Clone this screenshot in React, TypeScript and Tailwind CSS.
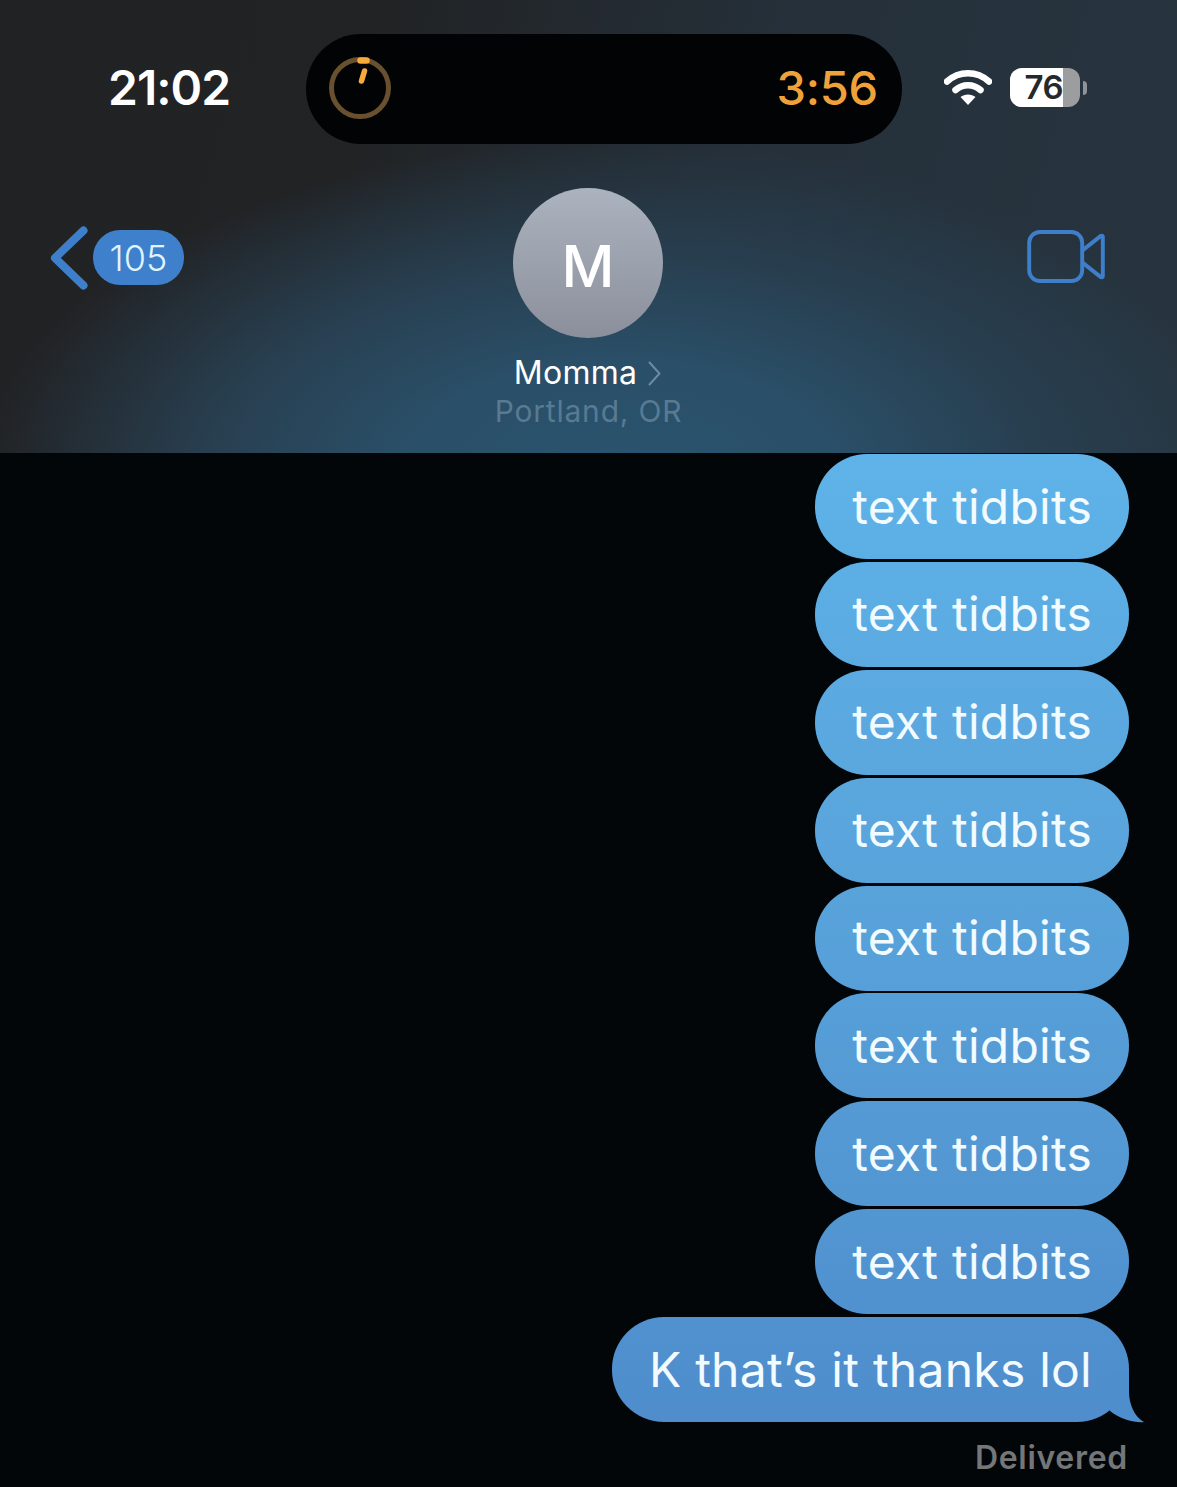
const bubbles = [
  "bg-[linear-gradient(180deg,#5fb3e8,#5cafe5)]",
  "bg-[linear-gradient(180deg,#5cafe5,#5baae1)]",
  "bg-[linear-gradient(180deg,#5baae1,#5aa7de)]",
  "bg-[linear-gradient(180deg,#5aa7de,#59a3db)]",
  "bg-[linear-gradient(180deg,#59a3db,#569fd8)]",
  "bg-[linear-gradient(180deg,#569fd8,#559ad4)]",
  "bg-[linear-gradient(180deg,#559ad4,#5296d2)]",
  "bg-[linear-gradient(180deg,#5296d2,#5091cf)]",
];

function Bubble({ text, className }: { text: string; className: string }) {
  return (
    <div className={`h-[105px] rounded-[52px] px-[37px] flex items-center text-[48px] leading-none tracking-[0.25px] text-[#f2fbff] ${className}`}>
      {text}
    </div>
  );
}

export default function App() {
  return (
    <div className="w-[1177px] h-[1487px] overflow-hidden bg-[#030608] font-['Inter','Liberation_Sans',sans-serif]">
      {/* Header */}
      <header className="h-[453px] bg-[radial-gradient(ellipse_640px_340px_at_620px_480px,#2b546e_0%,#2a4f68_35%,#283f50_65%,rgba(38,52,64,0)_100%),linear-gradient(105deg,#212224_0%,#212325_30%,#25303a_62%,#27343f_100%)]">
        {/* Status bar */}
        <div className="h-[144px] pt-[34px] flex">
          <div className="w-[306px] h-[110px] flex items-center pb-[2px] pl-[108px]">
            <span className="text-[48px] font-semibold leading-none tracking-[-1px] text-white">21:02</span>
          </div>
          <div className="w-[596px] h-[110px] rounded-[55px] bg-[#020304] flex items-center justify-between pl-[22px] pr-[24px]">
            <svg width="64" height="64" viewBox="0 0 64 64" fill="none">
              <circle cx="32" cy="31" r="28.5" stroke="#69502f" strokeWidth="5" />
              <path d="M32.5 3.5h6" stroke="#f6aa3e" strokeWidth="6.5" strokeLinecap="round" />
              <path d="M36.5 14 L33.5 24" stroke="#f6aa3e" strokeWidth="5.5" strokeLinecap="round" />
            </svg>
            <span className="pb-[4px] text-[47px] font-medium leading-none tracking-[-0.2px] text-[#f0a23a]">3:56</span>
          </div>
          <div className="flex items-center pl-[42px] pb-[3px]">
            <svg width="48" height="37" viewBox="0 0 48 37" fill="none">
              <path d="M3 12.5 C15 1.5 33 1.5 45 12.5" stroke="#fff" strokeWidth="6.5" strokeLinecap="round" />
              <path d="M11.5 21 C18.5 14.5 29.5 14.5 36.5 21" stroke="#fff" strokeWidth="6.5" strokeLinecap="round" />
              <path d="M24 36 L16.5 28 C20.5 24.5 27.5 24.5 31.5 28 Z" fill="#fff" />
            </svg>
            <div className="ml-[18px] w-[70px] h-[39px] rounded-[12px] overflow-hidden bg-[#9c9d9f] flex">
              <div className="w-[53px] h-full bg-white flex items-center justify-end pb-[1px]">
                <span className="text-[33px] font-semibold leading-none tracking-[-0.5px] text-[#26282b]">76</span>
              </div>
            </div>
            <div className="ml-[3px] w-[4px] h-[14px] rounded-r-full bg-[#8e9398]" />
          </div>
        </div>

        {/* Nav */}
        <div className="pt-[44px] grid grid-cols-[513px_150px_1fr]">
          <div className="pl-[50px] pt-[38px] flex items-start">
            <svg width="38" height="64" viewBox="0 0 38 64" fill="none">
              <path d="M33.5 4.5 L5 32 L33.5 59.5" stroke="#3d7fcb" strokeWidth="8" strokeLinecap="round" strokeLinejoin="round" />
            </svg>
            <div className="ml-[5px] mt-[4px] w-[91px] h-[55px] rounded-[27px] bg-[#3f80cc] flex items-center justify-center text-[36px] font-light leading-none text-[#dff4ff]">
              105
            </div>
          </div>
          <div className="w-[150px] h-[150px] rounded-full bg-[linear-gradient(180deg,#abb3bf,#8b8f9b)] flex items-center justify-center text-[58px] font-medium leading-none text-white pt-[6px]">
            M
          </div>
          <div className="pl-[364px] pt-[42px]">
            <svg width="78" height="53" viewBox="0 0 79 54" fill="none">
              <rect x="2" y="2" width="54" height="50" rx="11" stroke="#3e7fcb" strokeWidth="4" />
              <path d="M56 21 L75 6 C76 5.5 77 6 77 7 V47 C77 48 76 48.5 75 48 L56 33" stroke="#3e7fcb" strokeWidth="4" strokeLinejoin="round" />
            </svg>
          </div>
        </div>

        {/* Contact name */}
        <div className="mt-[15px] flex flex-col items-center">
          <div className="h-[40px] flex items-center pr-[2px]">
            <span className="text-[32px] leading-none tracking-[0.3px] text-white">Momma</span>
            <svg className="ml-[11px]" width="13" height="25" viewBox="0 0 13 25" fill="none">
              <path d="M1.5 1.5 L11.5 12.5 L1.5 23.5" stroke="#6d8ba1" strokeWidth="2" strokeLinecap="round" strokeLinejoin="round" />
            </svg>
          </div>
          <span className="text-[30px] leading-[36px] tracking-[0.8px] text-[#587a92]">Portland, OR</span>
        </div>
      </header>

      {/* Messages */}
      <main className="pt-px pr-[48px] flex flex-col items-end gap-[2.9px]">
        {bubbles.map((bg, i) => (
          <Bubble key={i} text="text tidbits" className={bg} />
        ))}
        <div className="relative">
          <Bubble text="K that’s it thanks lol" className="bg-[linear-gradient(180deg,#5091cf,#4f8dcc)]" />
          {/* tail */}
          <svg className="absolute right-[-15px] top-[53px]" width="34" height="53" viewBox="0 0 34 53" fill="none">
            <path d="M0 0 H19 V22 C19 33 24 47 34 52 C26 53 11 50 0 41 Z" fill="#4f8ecd" />
          </svg>
        </div>
        <span className="mt-[13px] pr-px text-[32px] font-semibold leading-[40px] tracking-[0.7px] text-[#757678]">Delivered</span>
      </main>
    </div>
  );
}
